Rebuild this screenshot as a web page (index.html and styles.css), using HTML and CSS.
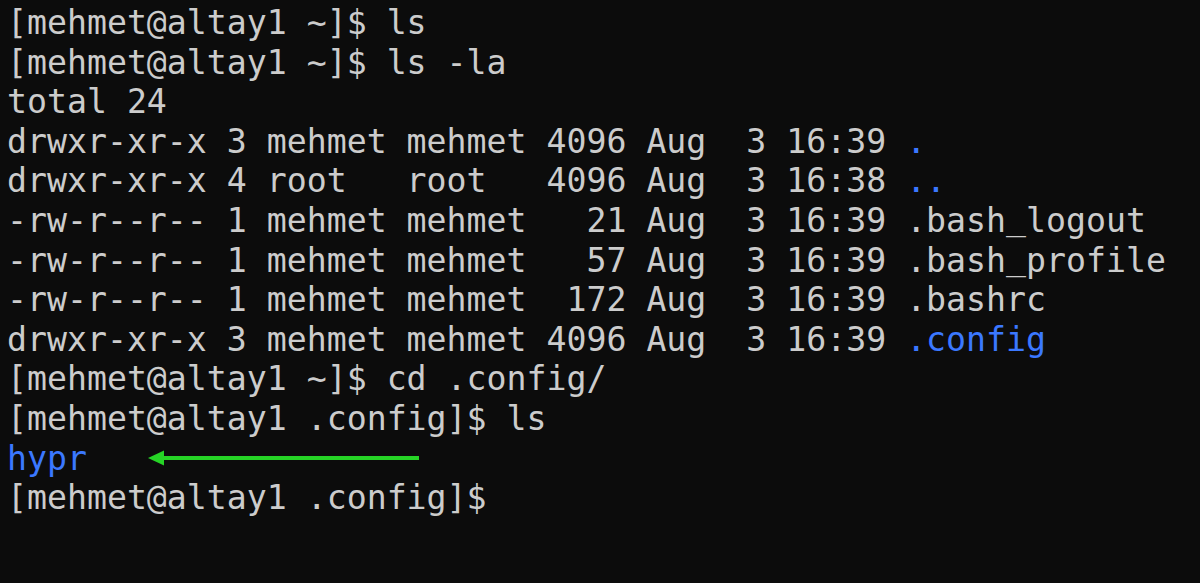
FILE: index.html
```html
<!DOCTYPE html>
<html>
<head>
<meta charset="utf-8">
<link rel="stylesheet" href="styles.css">
</head>
<body>
<pre class="term"><div class="ln">[mehmet@altay1 ~]$ ls</div><div class="ln">[mehmet@altay1 ~]$ ls -la</div><div class="ln">total 24</div><div class="ln">drwxr-xr-x 3 mehmet mehmet 4096 Aug  3 16:39 <span class="dir">.</span></div><div class="ln">drwxr-xr-x 4 root   root   4096 Aug  3 16:38 <span class="dir">..</span></div><div class="ln">-rw-r--r-- 1 mehmet mehmet   21 Aug  3 16:39 .bash<span class="us">_</span>logout</div><div class="ln">-rw-r--r-- 1 mehmet mehmet   57 Aug  3 16:39 .bash<span class="us">_</span>profile</div><div class="ln">-rw-r--r-- 1 mehmet mehmet  172 Aug  3 16:39 .bashrc</div><div class="ln">drwxr-xr-x 3 mehmet mehmet 4096 Aug  3 16:39 <span class="dir">.config</span></div><div class="ln">[mehmet@altay1 ~]$ cd .config/</div><div class="ln">[mehmet@altay1 .config]$ ls</div><div class="ln annot"><span class="dir">hypr</span><svg class="arrow" width="274" height="18" viewBox="0 0 274 18"><line x1="12" y1="9" x2="272" y2="9" stroke="#26d426" stroke-width="3.8"/><polygon points="1,9 17,1.5 17,16.5" fill="#26d426"/></svg></div><div class="ln">[mehmet@altay1 .config]$</div></pre>
</body>
</html>
```

FILE: styles.css
```css
html, body {
  margin: 0;
  padding: 0;
  background: #0c0c0c;
  width: 1200px;
  height: 583px;
  overflow: hidden;
}

.term {
  margin: 0;
  padding: 3px 0 0 7px;
  font-family: "DejaVu Sans Mono", monospace;
  font-size: 33.2px;
  line-height: 39.6px;
  color: #cccccc;
  white-space: pre;
}

.ln {
  height: 39.6px;
}

.dir {
  color: #3b78ff;
}

.us {
  display: inline-block;
  position: relative;
  top: -3px;
}

.annot {
  position: relative;
}

.arrow {
  position: absolute;
  left: 140px;
  top: 10px;
}
```
